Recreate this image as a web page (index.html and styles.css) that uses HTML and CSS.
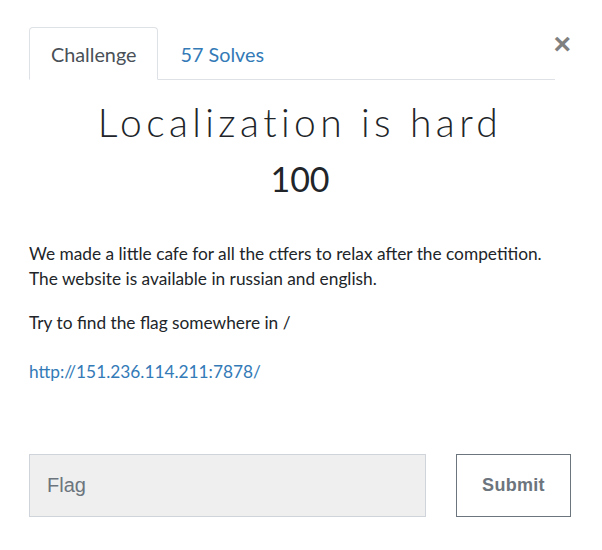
FILE: index.html
```html
<!DOCTYPE html>
<html>
<head>
<meta charset="utf-8">
<link rel="stylesheet" href="styles.css">
</head>
<body>
<div class="modal">
  <div class="head">
    <ul class="tabs">
      <li class="tab active">Challenge</li>
      <li class="tab">57 Solves</li>
    </ul>
    <span class="close">&times;</span>
  </div>
  <h2 class="title">Localization is hard</h2>
  <h3 class="value">100</h3>
  <div class="desc">
    <p>We made a little cafe for all the ctfers to relax after the competition. The website is available in russian and english.</p>
    <p>Try to find the flag somewhere in /</p>
    <p class="link"><a href="#">http://151.236.114.211:7878/</a></p>
  </div>
  <div class="form">
    <input class="flag" type="text" placeholder="Flag">
    <button class="submit">Submit</button>
  </div>
</div>
</body>
</html>
```
FILE: styles.css
```css
html, body { margin: 0; padding: 0; background: #fff; }
body { font-family: Lato, "Open Sans", sans-serif; color: #212529; }
.modal { padding: 27px 31px 0 29px; }
.head { position: relative; }
.tabs { list-style: none; margin: 0; padding: 0; display: flex; border-bottom: 1px solid #dee2e6; margin-right: 16px; }
.tab { font-size: 19.8px; padding: 0 21px; height: 51px; line-height: 53px; color: #337ab7; border: 1px solid transparent; border-radius: 4px 4px 0 0; margin-bottom: -1px; }
.tab.active { color: #495057; border-color: #dee2e6 #dee2e6 #fff; background: #fff; }
.close { position: absolute; right: 0; top: 2px; font-family: "Liberation Sans", Arial, sans-serif; font-size: 30px; font-weight: 700; color: #808080; line-height: 30px; }
.title { font-family: Lato, sans-serif; font-weight: 300; font-size: 39px; letter-spacing: 4.4px; text-align: center; margin: 17px 0 0; line-height: 50px; color: #212529; }
.value { font-weight: 400; font-size: 34px; text-align: center; margin: 10px 0 0; line-height: 44px; }
.desc { margin-top: 40px; margin-right: 18px; font-size: 17.3px; line-height: 25px; }
.desc p { margin: 0 0 19px; }
.desc p.link { margin-top: 24px; }
.desc a { color: #337ab7; text-decoration: none; }
.form { display: flex; margin-top: 70px; gap: 30px; }
.flag { width: 397px; height: 63px; box-sizing: border-box; background: #efefef; border: 1px solid #ced4da; padding: 0 17px; font-family: "Liberation Sans", Arial, sans-serif; font-size: 20px; color: #495057; }
.flag::placeholder { color: #6c757d; }
.submit { width: 115px; height: 63px; box-sizing: border-box; background: #fff; border: 1px solid #6c757d; color: #6c757d; font-family: "Liberation Sans", Arial, sans-serif; font-weight: 700; font-size: 18px; letter-spacing: 0.3px; }
```
